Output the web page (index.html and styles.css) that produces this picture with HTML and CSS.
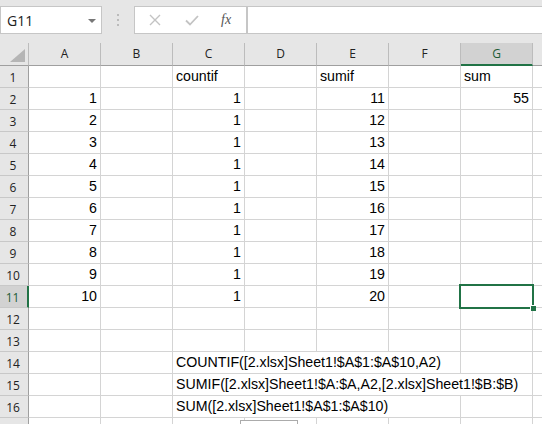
FILE: index.html
```html
<!DOCTYPE html>
<html lang="en">

<head>
    <meta charset="UTF-8">
    <title>Book1 - Excel</title>
    <link rel="stylesheet" href="styles.css">
</head>

<body>
    <div class="toolbar">
        <div class="namebox">
            <span>G11</span>
            <svg class="caret" width="8" height="4" viewBox="0 0 8 4"><path d="M0 0H8L4 4Z" fill="#777"/></svg>
        </div>
        <svg class="grip" width="3" height="13" viewBox="0 0 3 13">
            <rect x="0" y="0" width="2" height="2" fill="#bbb"/>
            <rect x="0" y="5" width="2" height="2" fill="#bbb"/>
            <rect x="0" y="10" width="2" height="2" fill="#bbb"/>
        </svg>
        <div class="fxbtns">
            <svg width="12" height="12" viewBox="0 0 12 12"><path d="M1 1L11 11M11 1L1 11" stroke="#c3c3c3" stroke-width="1.4"/></svg>
            <svg width="14" height="11" viewBox="0 0 14 11"><path d="M1 5.5L5 9.5L13 1" stroke="#c3c3c3" stroke-width="1.8" fill="none"/></svg>
            <span class="fx">fx</span>
        </div>
        <div class="formula"></div>
    </div>

    <div class="sheet">
        <div class="corner"><svg width="15" height="13" viewBox="0 0 15 13"><path d="M15 0V13H0Z" fill="#b5b5b5"/></svg></div>
        <div class="col">A</div><div class="col">B</div><div class="col">C</div><div class="col">D</div>
        <div class="col">E</div><div class="col">F</div><div class="col sel">G</div><div class="col"></div>

        <div class="rh">1</div><div class="c"></div><div class="c"></div><div class="c">countif</div><div class="c"></div><div class="c">sumif</div><div class="c"></div><div class="c">sum</div><div class="c"></div>
        <div class="rh">2</div><div class="c n">1</div><div class="c"></div><div class="c n">1</div><div class="c"></div><div class="c n">11</div><div class="c"></div><div class="c n">55</div><div class="c"></div>
        <div class="rh">3</div><div class="c n">2</div><div class="c"></div><div class="c n">1</div><div class="c"></div><div class="c n">12</div><div class="c"></div><div class="c"></div><div class="c"></div>
        <div class="rh">4</div><div class="c n">3</div><div class="c"></div><div class="c n">1</div><div class="c"></div><div class="c n">13</div><div class="c"></div><div class="c"></div><div class="c"></div>
        <div class="rh">5</div><div class="c n">4</div><div class="c"></div><div class="c n">1</div><div class="c"></div><div class="c n">14</div><div class="c"></div><div class="c"></div><div class="c"></div>
        <div class="rh">6</div><div class="c n">5</div><div class="c"></div><div class="c n">1</div><div class="c"></div><div class="c n">15</div><div class="c"></div><div class="c"></div><div class="c"></div>
        <div class="rh">7</div><div class="c n">6</div><div class="c"></div><div class="c n">1</div><div class="c"></div><div class="c n">16</div><div class="c"></div><div class="c"></div><div class="c"></div>
        <div class="rh">8</div><div class="c n">7</div><div class="c"></div><div class="c n">1</div><div class="c"></div><div class="c n">17</div><div class="c"></div><div class="c"></div><div class="c"></div>
        <div class="rh">9</div><div class="c n">8</div><div class="c"></div><div class="c n">1</div><div class="c"></div><div class="c n">18</div><div class="c"></div><div class="c"></div><div class="c"></div>
        <div class="rh">10</div><div class="c n">9</div><div class="c"></div><div class="c n">1</div><div class="c"></div><div class="c n">19</div><div class="c"></div><div class="c"></div><div class="c"></div>
        <div class="rh sel">11</div><div class="c n">10</div><div class="c"></div><div class="c n">1</div><div class="c"></div><div class="c n">20</div><div class="c"></div><div class="c active"></div><div class="c"></div>
        <div class="rh">12</div><div class="c"></div><div class="c"></div><div class="c"></div><div class="c"></div><div class="c"></div><div class="c"></div><div class="c"></div><div class="c"></div>
        <div class="rh">13</div><div class="c"></div><div class="c"></div><div class="c"></div><div class="c"></div><div class="c"></div><div class="c"></div><div class="c"></div><div class="c"></div>
        <div class="rh">14</div><div class="c"></div><div class="c"></div><div class="c span4">COUNTIF([2.xlsx]Sheet1!$A$1:$A$10,A2)</div><div class="c"></div><div class="c"></div>
        <div class="rh">15</div><div class="c"></div><div class="c"></div><div class="c span5">SUMIF([2.xlsx]Sheet1!$A:$A,A2,[2.xlsx]Sheet1!$B:$B)</div><div class="c"></div>
        <div class="rh">16</div><div class="c"></div><div class="c"></div><div class="c span4">SUM([2.xlsx]Sheet1!$A$1:$A$10)</div><div class="c"></div><div class="c"></div>
        <div class="rh"></div><div class="c"></div><div class="c"></div><div class="c"></div><div class="c"></div><div class="c"></div><div class="c"></div><div class="c"></div><div class="c"></div>
    </div>

    <!-- paste options tag peeking in at the bottom -->
    <div class="paste-tag"></div>
</body>

</html>
```

FILE: styles.css
```css
body {
    margin: 0;
    padding: 0;
    width: 542px;
    height: 424px;
    overflow: hidden;
    background: #fff;
    position: relative;
    font-family: "Liberation Sans", Arial, sans-serif;
}

/* 名称框和编辑栏 */
.toolbar {
    height: 43px;
    background: #e6e6e6;
    display: flex;
    align-items: flex-start;
    padding-top: 6px;
    box-sizing: border-box;
}

.namebox {
    width: 102px;
    height: 28px;
    box-sizing: border-box;
    background: #fff;
    border: 1px solid #c6c6c6;
    display: flex;
    align-items: center;
    justify-content: space-between;
    padding: 0 5px 0 6px;
    font-family: "Open Sans", sans-serif;
    font-size: 14px;
    color: #222;
}

.caret {
    margin-top: 1px;
}

.grip {
    margin: 8px 14px 0 15px;
}

.fxbtns {
    width: 113px;
    height: 28px;
    box-sizing: border-box;
    background: #fff;
    border: 1px solid #c6c6c6;
    display: flex;
    align-items: center;
    gap: 24px;
    padding-left: 14px;
}

.fx {
    font-family: "Liberation Serif", serif;
    font-style: italic;
    font-size: 14px;
    color: #555;
    margin-left: -2px;
}

.formula {
    flex: 1;
    height: 28px;
    box-sizing: border-box;
    background: #fff;
    border: 1px solid #c6c6c6;
    border-right: none;
}

/* 表格 */
.sheet {
    display: grid;
    grid-template-columns: 29px repeat(8, 72px);
    grid-template-rows: 23px;
    grid-auto-rows: 22px;
}

.sheet > div {
    box-sizing: border-box;
}

.corner {
    background: #e6e6e6;
    border-right: 1px solid #bcbcbc;
    border-bottom: 1px solid #9f9f9f;
    display: flex;
    justify-content: flex-end;
    align-items: flex-end;
    padding: 0 3px 3px 0;
}

.col {
    background: #e6e6e6;
    border-right: 1px solid #bcbcbc;
    border-bottom: 1px solid #9f9f9f;
    text-align: center;
    font-family: "Open Sans", sans-serif;
    font-size: 12px;
    line-height: 22px;
    color: #222;
}

.col.sel {
    background: #d2d2d2;
    border-bottom: 2px solid #217346;
    color: #1d5c36;
}

.rh {
    background: #e6e6e6;
    border-right: 1px solid #9f9f9f;
    border-bottom: 1px solid #c8c8c8;
    font-family: "Open Sans", sans-serif;
    font-size: 12px;
    color: #222;
    display: flex;
    align-items: flex-end;
    justify-content: center;
    padding-bottom: 1px;
    padding-right: 2px;
}

.rh.sel {
    background: #d2d2d2;
    border-right: 2px solid #217346;
    color: #1d5c36;
}

.c {
    border-right: 1px solid #d4d4d4;
    border-bottom: 1px solid #d4d4d4;
    font-size: 14.2px;
    color: #000;
    white-space: nowrap;
    display: flex;
    align-items: flex-end;
    padding: 0 3px 3px 3px;
    line-height: 16px;
}

.c.n {
    justify-content: flex-end;
}

.span4 {
    grid-column: span 4;
}

.span5 {
    grid-column: span 5;
}

.c.active {
    position: relative;
}

.c.active::before {
    content: "";
    position: absolute;
    left: -2px;
    top: -2px;
    right: -2px;
    bottom: -2px;
    border: 2px solid #217346;
}

.c.active::after {
    content: "";
    position: absolute;
    right: -4px;
    bottom: -4px;
    width: 5px;
    height: 5px;
    background: #217346;
    border-left: 1px solid #fff;
    border-top: 1px solid #fff;
}

.paste-tag {
    position: absolute;
    left: 240px;
    top: 420px;
    width: 58px;
    height: 20px;
    box-sizing: border-box;
    background: #fff;
    border: 1px solid #ababab;
}
```
